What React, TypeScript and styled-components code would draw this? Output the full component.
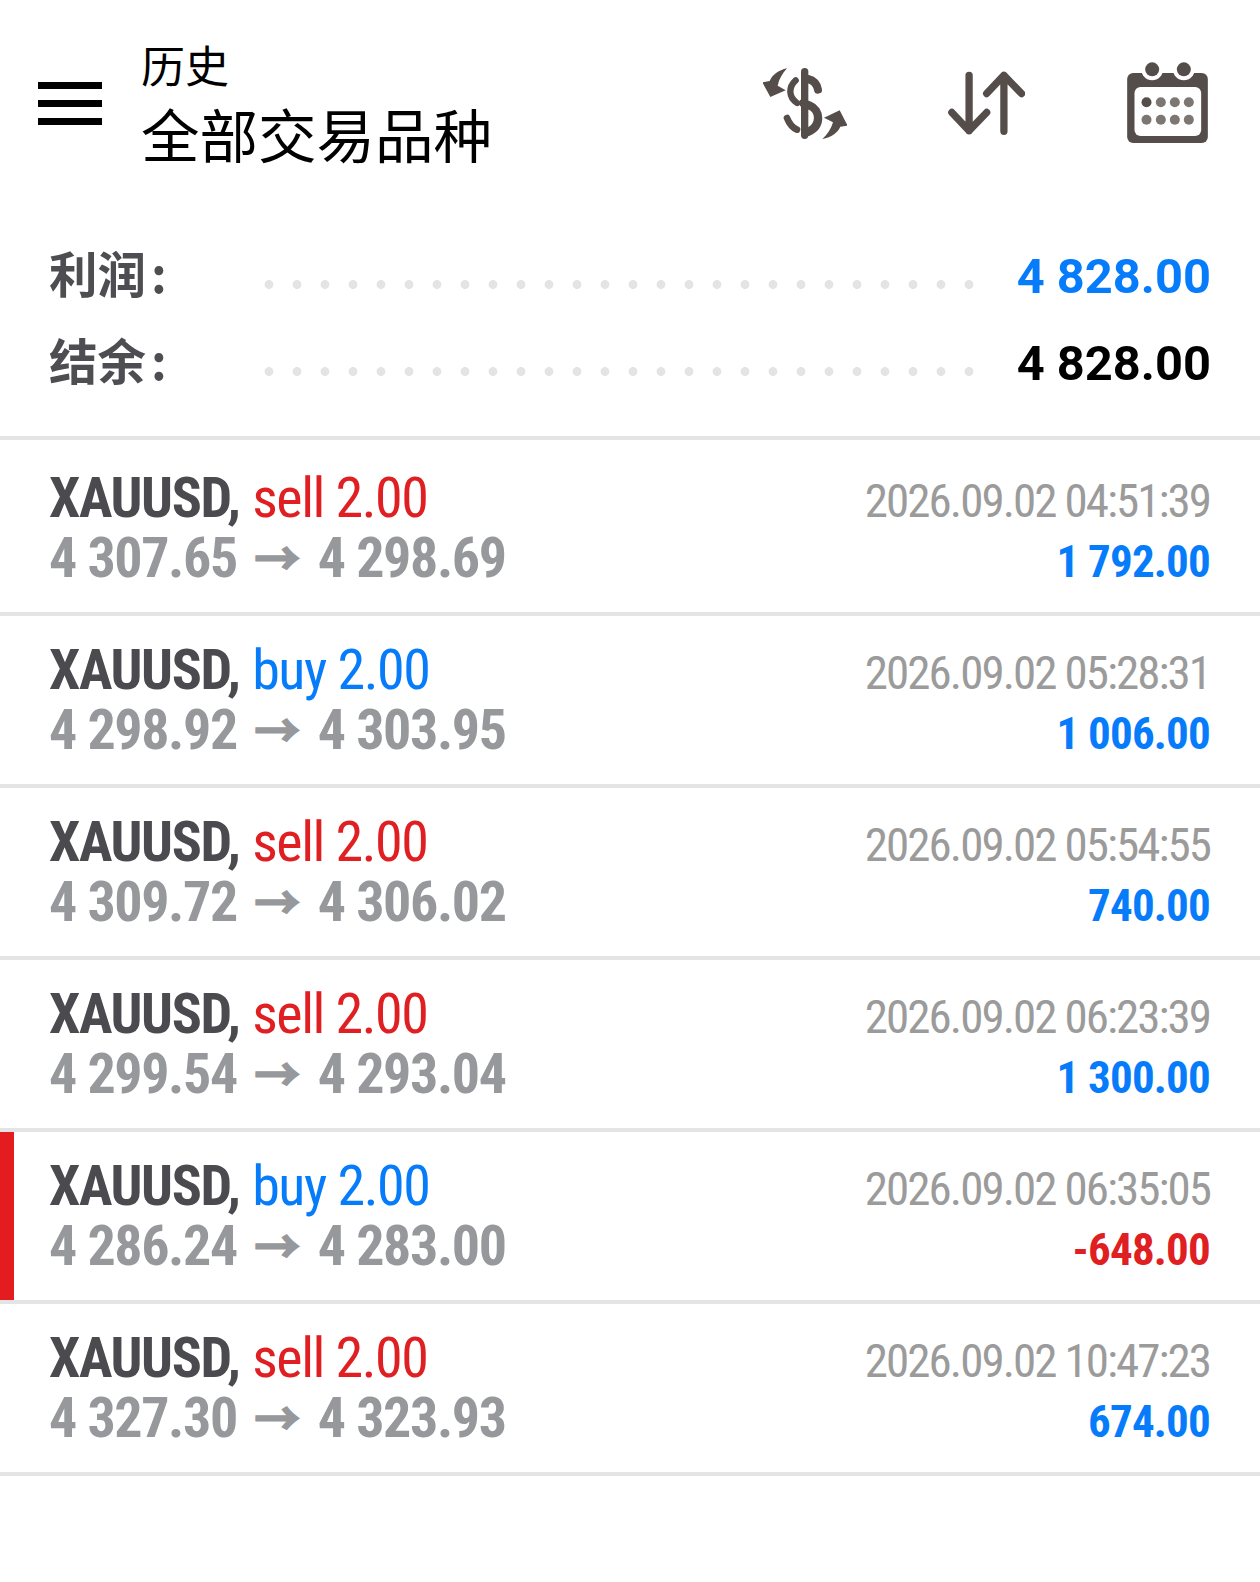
import React from "react";
import styled, { createGlobalStyle } from "styled-components";

const Global = createGlobalStyle`
  html, body { margin: 0; padding: 0; background: #fff; }
  body { font-family: Roboto, "Noto Sans CJK SC", sans-serif; font-stretch: 75%; }
`;
const Page = styled.div`width: 1260px; height: 1582px; background: #fff; overflow: hidden;`;
const Header = styled.header`display: flex; align-items: center; height: 210px; box-sizing: border-box; padding: 0 52px 4px 38px;`;
const Burger = styled.div`display: flex; flex-direction: column; gap: 11px; width: 64px; margin-right: 39px; span { display: block; height: 7px; background: #000; }`;
const Titles = styled.div`flex: 1; display: flex; flex-direction: column; margin-bottom: 2px; font-family: "Noto Sans CJK SC", sans-serif; color: #000; font-stretch: normal;`;
const Sub = styled.div`font-size: 44px; line-height: 54px;`;
const Title = styled.div`font-size: 58.5px; line-height: 70px; margin-top: 7px;`;
const Icons = styled.div`display: flex; align-items: center; gap: 100.5px;`;
const Icon = styled.svg`display: block; color: #554d4a;`;
const SortSvg = styled(Icon)`margin-right: 2px;`;
const CalendarSvg = styled(Icon)`margin-bottom: 2px;`;
const Summary = styled.section`padding: 32px 49px 47px 49px; border-bottom: 4px solid #e4e4e4; display: flex; flex-direction: column; gap: 27px;`;
const SumRow = styled.div`display: flex; align-items: center; height: 60px;`;
const SumLabel = styled.div`display: flex; flex: 0 0 205.5px; font-family: "Noto Sans CJK SC", sans-serif; font-weight: 700; font-size: 48.5px; color: #4d4d52; font-stretch: normal; i { font-style: normal; margin-left: 5px; }`;
const Dots = styled.div`flex: 0 0 728px; height: 9px; margin-top: 24px; background-image: radial-gradient(circle, #e4e4e4 4.2px, transparent 4.7px); background-size: 28px 9px; background-repeat: repeat-x;`;
const SumValue = styled.div<{ $c: string }>`margin-left: auto; padding-top: 8px; font-size: 48.8px; font-weight: 700; font-stretch: 100%; color: ${(p) => p.$c};`;
const List = styled.div`padding-top: 4px;`;
const Row = styled.article<{ $mark?: boolean }>`position: relative; height: 168px; border-bottom: 4px solid #e4e4e4; display: flex; justify-content: space-between; padding: 0 50px 0 49px; &::before { content: ""; display: ${(p) => (p.$mark ? "block" : "none")}; position: absolute; left: 0; top: 0; bottom: 0; width: 14px; background: #e31c1f; }`;
const Left = styled.div`display: flex; flex-direction: column; padding-top: 24px;`;
const Right = styled.div`display: flex; flex-direction: column; align-items: flex-end; padding-top: 29px;`;
const Line1 = styled.div`font-size: 56px; line-height: 60px; white-space: nowrap; letter-spacing: -1.4px;`;
const Sym = styled.span`font-weight: 700; color: #4a4a4f;`;
const Side = styled.span<{ $c: string }>`margin-left: 1px; color: ${(p) => p.$c};`;
const Prices = styled.div`font-size: 56px; line-height: 60px; font-weight: 700; color: #96989b; white-space: nowrap; letter-spacing: -1.4px;`;
const Arrow = styled.span`font-size: 46px; line-height: 1; margin: 0 6px; letter-spacing: 0; vertical-align: 2px; -webkit-text-stroke: 1.5px currentColor;`;
const Time = styled.div`font-size: 47px; line-height: 56px; color: #9b9b9b; white-space: nowrap; letter-spacing: -1.95px;`;
const Profit = styled.div<{ $c: string }>`font-size: 45px; line-height: 65px; font-weight: 700; letter-spacing: -0.8px; color: ${(p) => p.$c};`;

const rows = [
  ["sell", "4 307.65", "4 298.69", "2026.09.02 04:51:39", "1 792.00"],
  ["buy", "4 298.92", "4 303.95", "2026.09.02 05:28:31", "1 006.00"],
  ["sell", "4 309.72", "4 306.02", "2026.09.02 05:54:55", "740.00"],
  ["sell", "4 299.54", "4 293.04", "2026.09.02 06:23:39", "1 300.00"],
  ["buy", "4 286.24", "4 283.00", "2026.09.02 06:35:05", "-648.00"],
  ["sell", "4 327.30", "4 323.93", "2026.09.02 10:47:23", "674.00"],
];
const BLUE = "#067cfb", RED = "#e01f22";

const DollarIcon = () => (
  <Icon width="84" height="71" viewBox="70 55 252 213">
    <g fill="none" stroke="currentColor" strokeLinecap="round">
      <path d="M195 66V257" strokeWidth="22" />
      <path d="M205 88C222 92 232 105 235 120" strokeWidth="24" />
      <path d="M168 92C146 112 146 142 172 160" strokeWidth="19" />
      <path d="M190 160L210 168C242 180 247 228 205 247" strokeWidth="25" />
      <path d="M142 205C150 225 160 235 172 240" strokeWidth="20" />
    </g>
    <g fill="currentColor">
      <path d="M142 56C116 62 98 75 90 94L68 98L92 142L138 122L114 108C118 88 128 72 142 56Z" />
      <path d="M248 268C276 262 294 249 302 231L324 228L300 182L253 204L280 218C274 238 264 254 248 268Z" />
    </g>
  </Icon>
);
const SortIcon = () => (
  <SortSvg width="77" height="64" viewBox="625 65 231 193">
    <g fill="none" stroke="currentColor" strokeWidth="22" strokeLinecap="round" strokeLinejoin="round">
      <path d="M688 78V245M636 190L688 245L741 190" />
      <path d="M793 78V247M741 133L793 78L846 133" />
    </g>
  </SortSvg>
);
const CalendarIcon = () => (
  <CalendarSvg width="81" height="81" viewBox="1160 35 242 243">
    <rect x="1160" y="68" width="242" height="210" rx="18" fill="currentColor" />
    <circle cx="1235" cy="57" r="33" fill="#fff" />
    <circle cx="1330" cy="57" r="33" fill="#fff" />
    <circle cx="1235" cy="57" r="21" fill="currentColor" />
    <circle cx="1330" cy="57" r="21" fill="currentColor" />
    <rect x="1182" y="110" width="200" height="147" rx="18" fill="#fff" />
    <circle cx="1218" cy="156" r="15" fill="currentColor" />
    {[1261, 1303, 1345].map((x) => <circle key={x} cx={x} cy="156" r="15" fill="#7d7774" />)}
    {[1218, 1261, 1303, 1345].map((x) => <circle key={x} cx={x} cy="208" r="15" fill="#7d7774" />)}
  </CalendarSvg>
);

export default function App() {
  return (
    <Page>
      <Global />
      <Header>
        <Burger><span /><span /><span /></Burger>
        <Titles><Sub>历史</Sub><Title>全部交易品种</Title></Titles>
        <Icons><DollarIcon /><SortIcon /><CalendarIcon /></Icons>
      </Header>
      <Summary>
        <SumRow><SumLabel>利润<i>:</i></SumLabel><Dots /><SumValue $c={BLUE}>4 828.00</SumValue></SumRow>
        <SumRow><SumLabel>结余<i>:</i></SumLabel><Dots /><SumValue $c="#000">4 828.00</SumValue></SumRow>
      </Summary>
      <List>
        {rows.map((r, i) => (
          <Row key={i} $mark={r[4].startsWith("-")}>
            <Left>
              <Line1><Sym>XAUUSD,</Sym> <Side $c={r[0] === "buy" ? BLUE : RED}>{r[0]} 2.00</Side></Line1>
              <Prices>{r[1]} <Arrow>→</Arrow> {r[2]}</Prices>
            </Left>
            <Right>
              <Time>{r[3]}</Time>
              <Profit $c={r[4].startsWith("-") ? RED : BLUE}>{r[4]}</Profit>
            </Right>
          </Row>
        ))}
      </List>
    </Page>
  );
}
